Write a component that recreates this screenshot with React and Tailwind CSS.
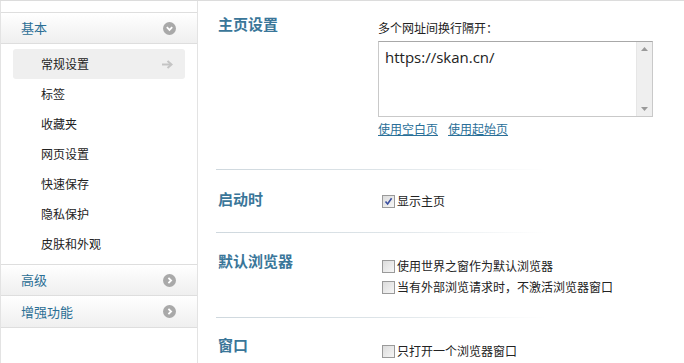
import React from 'react';

const font = { fontFamily: '"Noto Sans CJK SC", "Noto Sans", sans-serif' };

function CircleChevron({ down }) {
  return (
    <svg width="13" height="13" viewBox="0 0 13 13">
      <circle cx="6.5" cy="6.5" r="6.5" fill="#a9a9a9" />
      {down ? (
        <path d="M3.8 5.2 L6.5 7.9 L9.2 5.2" stroke="#fff" strokeWidth="1.8" fill="none" />
      ) : (
        <path d="M5.4 3.8 L8.1 6.5 L5.4 9.2" stroke="#fff" strokeWidth="1.8" fill="none" />
      )}
    </svg>
  );
}

function Arrow() {
  return (
    <svg width="11" height="9" viewBox="0 0 11 9">
      <path d="M0 4.5 H8" stroke="#c4c4c4" strokeWidth="2" />
      <path d="M5.5 1 L9.5 4.5 L5.5 8" stroke="#c4c4c4" strokeWidth="2" fill="none" />
    </svg>
  );
}

function GroupHeader({ label, down, borderTop }) {
  return (
    <div
      className={`flex h-[32px] items-center justify-between border-b border-[#dedede] bg-gradient-to-b from-white to-[#efefef] pl-[20px] pr-[21px] text-[13px] text-[#2c6f95] ${borderTop ? 'border-t' : ''}`}
    >
      <span>{label}</span>
      <CircleChevron down={down} />
    </div>
  );
}

function Checkbox({ checked, label }) {
  return (
    <div className="flex items-center text-[12px] text-[#222]">
      <span className="ml-[4px] mr-[2px] flex h-[13px] w-[13px] items-center justify-center border border-[#9a9a9a] bg-gradient-to-br from-[#dcdcdc] to-[#f6f6f6]">
        {checked && (
          <svg width="9" height="9" viewBox="0 0 9 9">
            <path d="M1.5 4.5 L3.6 7 L7.6 1.2" stroke="#3a4fa0" strokeWidth="1.6" fill="none" />
          </svg>
        )}
      </span>
      <span>{label}</span>
    </div>
  );
}

function Separator() {
  return <div className="ml-[18px] h-px w-[330px] bg-gradient-to-r from-[#cfd8de] via-[#dde4e8] to-transparent" />;
}

function Heading({ children }) {
  return <div className="w-[180px] pl-[20px] text-[15px] font-bold leading-[20px] text-[#3a7699]">{children}</div>;
}

export default function App() {
  const items = ['标签', '收藏夹', '网页设置', '快速保存', '隐私保护', '皮肤和外观'];
  return (
    <div className="flex h-[363px] w-[684px] overflow-hidden border-t border-[#dcdcdc] bg-white" style={font}>
      <aside className="w-[198px] shrink-0 border-l border-r border-[#e3e3e3] pt-[11px]">
        <GroupHeader label="基本" down borderTop />
        <div className="pt-[5px] pb-[5px] text-[12px] text-[#222]">
          <div className="mx-[12px] flex h-[30px] items-center justify-between rounded-[3px] bg-[#efefef] pl-[28px] pr-[12px]">
            <span>常规设置</span>
            <Arrow />
          </div>
          {items.map((t) => (
            <div key={t} className="flex h-[30px] items-center pl-[40px]">
              {t}
            </div>
          ))}
        </div>
        <GroupHeader label="高级" borderTop />
        <GroupHeader label="增强功能" />
      </aside>

      <main className="flex-1">
        <section className="flex h-[168px]">
          <div className="pt-[13px]">
            <Heading>主页设置</Heading>
          </div>
          <div className="pt-[19px]">
            <div className="text-[12px] leading-[16px] text-[#222]">多个网址间换行隔开：</div>
            <div className="mt-[5px] flex h-[76px] w-[275px] border border-[#c9c9c9] border-t-[#a8a8a8]">
              <div className="flex-1 pl-[6px] pt-[4px] text-[15px] leading-[22px] text-[#222]" style={{ fontFamily: '"Open Sans", "Noto Sans", sans-serif' }}>
                https://skan.cn/
              </div>
              <div className="flex w-[16px] flex-col items-center justify-between border-l border-[#e6e6e6] bg-[#efefef] py-[5px]">
                <svg width="7" height="4" viewBox="0 0 7 4"><path d="M0 4 L3.5 0 L7 4 Z" fill="#9a9a9a" /></svg>
                <svg width="7" height="4" viewBox="0 0 7 4"><path d="M0 0 L3.5 4 L7 0 Z" fill="#9a9a9a" /></svg>
              </div>
            </div>
            <div className="mt-[4px] flex gap-[10px] text-[12px] leading-[16px] text-[#2a6f98] underline">
              <span>使用空白页</span>
              <span>使用起始页</span>
            </div>
          </div>
        </section>
        <Separator />
        <section className="flex h-[62px]">
          <div className="pt-[19px]">
            <Heading>启动时</Heading>
          </div>
          <div className="pt-[23px] leading-[16px]">
            <Checkbox checked label="显示主页" />
          </div>
        </section>
        <Separator />
        <section className="flex h-[84px]">
          <div className="pt-[18px]">
            <Heading>默认浏览器</Heading>
          </div>
          <div className="flex flex-col gap-[5px] pt-[25px] leading-[16px]">
            <Checkbox label="使用世界之窗作为默认浏览器" />
            <Checkbox label="当有外部浏览请求时，不激活浏览器窗口" />
          </div>
        </section>
        <Separator />
        <section className="flex">
          <div className="pt-[17px]">
            <Heading>窗口</Heading>
          </div>
          <div className="pt-[25px] leading-[16px]">
            <Checkbox label="只打开一个浏览器窗口" />
          </div>
        </section>
      </main>
    </div>
  );
}
